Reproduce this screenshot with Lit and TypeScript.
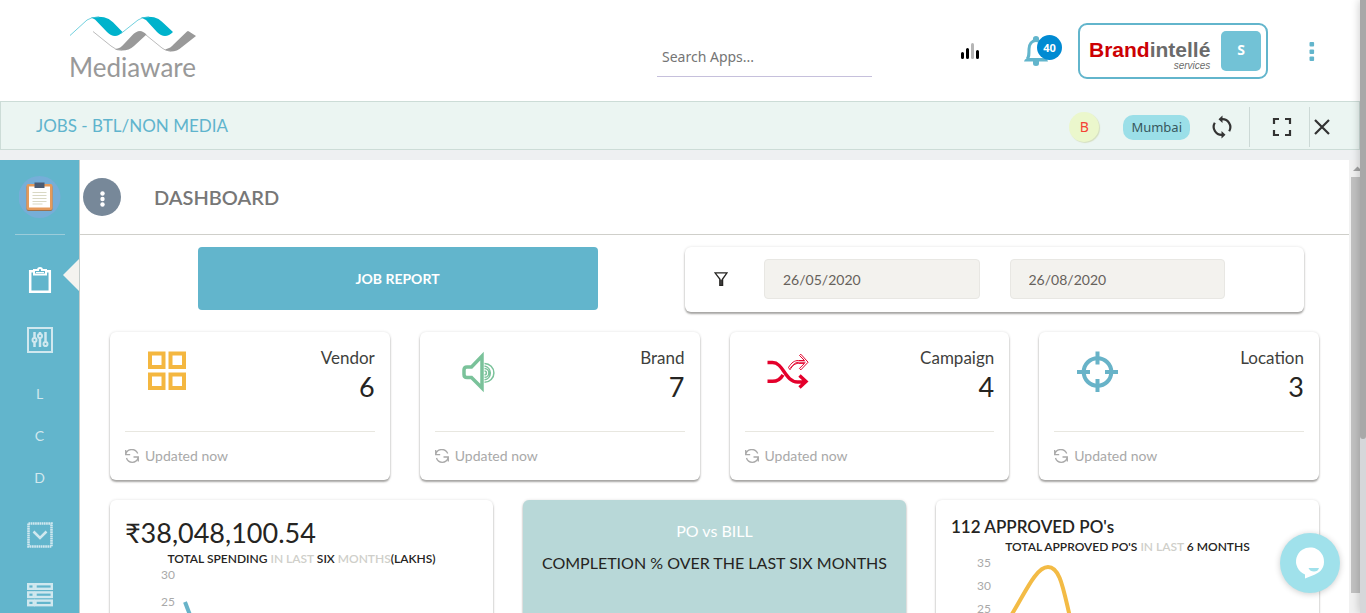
import { LitElement, html, css, svg } from "lit";
import { customElement, property } from "lit/decorators.js";

const statIcons: Record<string, unknown> = {
  Vendor: svg`<g fill="none" stroke="#f4b740" stroke-width="4"><rect x="4" y="3.500" width="13.500" height="13.500"/><rect x="24.500" y="3.500" width="13.500" height="13.500"/><rect x="4" y="24.500" width="13.500" height="13.500"/><rect x="24.500" y="24.500" width="13.500" height="13.500"/></g>`,
  Brand: svg`<g fill="none" stroke="#7ac29a" transform="translate(3.500 1)"><path stroke-width="3.500" d="M22.500 5v32L12 26.500H7.500q-3 0-3-3v-4.500q0-3 3-3H12z"/><path stroke-width="1.500" d="M25 12.500a9 9 0 0 1 0 18.800M25 15a7 7 0 0 1 0 13.800M25 17.500a4.400 4.400 0 0 1 0 8.800M25 20a1.800 1.800 0 0 1 0 3.800"/></g>`,
  Campaign: svg`<g fill="none" stroke="#e4002b" transform="translate(.5 1)"><path stroke-width="3.400" d="M1 11.500h5c11 0 12.500 19.500 25 19.500h8M1 30.300h5c5 0 8-2 10.500-6.500M33 24.500l6.500 6-6.500 6"/><path stroke-width="1" d="M22 16.500c3-5 6-7 10-7h6l-5-5 1.300-1.300 7.300 8-7.300 7.700-1.300-1.500 5-5h-6c-3.500 0-6 2-8.500 6.300zM24 17c3-4 5-5.800 9-5.800h6"/></g>`,
  Location: svg`<g fill="none" stroke="#68b3c8" stroke-width="4" transform="translate(2 .5)"><circle cx="20.500" cy="21.500" r="13.800"/><path d="M20.500 1v13M20.500 28.500v13M0 21.500h13M28 21.500h13"/></g>`,
};

@customElement("stat-card")
class StatCard extends LitElement {
  @property() label = "";
  @property() value = "";

  static styles = css`
    :host {
      display: block;
      padding: 15px;
      border-radius: 6px;
      background: #fff;
      box-shadow: 0 2px 2px rgba(100, 98, 95, 0.55), 0 0 3px rgba(0, 0, 0, 0.12);
    }
    .body {
      display: flex;
      justify-content: space-between;
      min-height: 84px;
      padding-left: 21px;
    }
    .icon { width: 42px; height: 42px; margin-top: 3px; overflow: visible; }
    .figures { text-align: right; color: #252422; }
    .label { margin: 0; font-size: 17px; line-height: 22px; color: #403f3d; }
    .value { margin: 0; font-size: 27px; line-height: 36px; }
    .foot {
      display: flex;
      align-items: center;
      gap: 6px;
      border-top: 1px solid #e8e7e0;
      padding-top: 15px;
      font-size: 14px;
      line-height: 18px;
      color: #a9a9a9;
    }
    .reload { width: 14px; height: 14px; }
  `;

  render() {
    return html`
      <div class="body">
        <svg class="icon" viewBox="0 0 42 42">${statIcons[this.label]}</svg>
        <div class="figures">
          <p class="label">${this.label}</p>
          <p class="value">${this.value}</p>
        </div>
      </div>
      <div class="foot">
        <svg class="reload" viewBox="0 0 14 14" fill="none" stroke="#a9a9a9" stroke-width="1.300">
          <path d="M.7 1v4.600h4.500M.8 5A6.300 6.300 0 0 1 12.700 4.500M13.300 12.500V8H8.500M13 9A6 6 0 0 1 1.500 9" />
        </svg>
        <span>Updated now</span>
      </div>
    `;
  }
}

@customElement("app-root")
class AppRoot extends LitElement {
  static styles = css`
    * { box-sizing: border-box; }
    :host {
      display: flex;
      flex-direction: column;
      position: relative;
      height: 100vh;
      overflow: hidden;
      background: #eef0f2;
      font-family: Lato, "Liberation Sans", sans-serif;
      color: #252422;
    }
    button { border: 0; padding: 0; background: none; font: inherit; color: inherit; cursor: pointer; }
    svg { display: block; flex: none; }

    .top {
      flex: none;
      display: flex;
      align-items: center;
      height: 101px;
      padding: 0 46px 0 69px;
      background: #fff;
    }
    .logo { margin-right: auto; padding-bottom: 4px; color: #999; text-decoration: none; }
    .logo-mark { width: 127px; height: 37px; }
    .logo-name { display: block; font-size: 26px; line-height: 28px; }
    .search {
      width: 215px;
      height: 40px;
      margin: 12px 88px 0 0;
      padding: 0 5px;
      border: 0;
      border-bottom: 1px solid #c6c0dc;
      outline: 0;
      background: none;
      font-family: "Noto Sans", sans-serif;
      font-size: 14px;
    }
    .search::placeholder { color: #757575; }
    .bell { position: relative; width: 38px; height: 30px; margin: 0 16px 0 44px; }
    .badge {
      position: absolute;
      top: -1px;
      right: 0;
      width: 25px;
      height: 25px;
      border-radius: 50%;
      background: #008ad2;
      color: #fff;
      font: bold 11px/25px "Noto Sans", sans-serif;
      text-align: center;
    }
    .account {
      display: flex;
      align-items: center;
      justify-content: space-between;
      width: 190px;
      height: 56px;
      padding: 0 5px 0 9px;
      border: 2px solid #62b5cc;
      border-radius: 9px;
    }
    .brand { display: flex; flex-direction: column; padding-top: 6px; text-align: right; font-family: "Liberation Sans", sans-serif; color: #6b6b6b; }
    .brand-name { font-size: 21px; font-weight: bold; line-height: 24px; }
    .brand-red { color: #cc0003; }
    .brand-sub { font-size: 10px; font-style: italic; line-height: 8px; }
    .initial {
      width: 40px;
      height: 40px;
      border-radius: 5px;
      background: #72c2d6;
      color: #fff;
      font: bold 14px/38px "Noto Sans", sans-serif;
      text-align: center;
    }
    .menu { width: 16px; margin-left: 36px; }

    .bar {
      flex: none;
      display: flex;
      align-items: center;
      justify-content: space-between;
      height: 49px;
      margin: 0 6px 10px 0;
      padding: 0 25px 0 35px;
      border: 1px solid #ccdcd7;
      background: #ebf5f2;
    }
    .bar-title { margin: 0; font-size: 17px; font-weight: 400; color: #5fb4cd; }
    .tools { display: flex; align-items: center; padding-top: 3px; }
    .tag-b {
      width: 30px;
      height: 30px;
      margin-right: 24px;
      border-radius: 50%;
      background: #ebf7cc;
      box-shadow: 1px 1px 1px #d5dfc0;
      color: #f44336;
      font: 14px/30px "Noto Sans", sans-serif;
      text-align: center;
    }
    .pill {
      padding: 0 8px;
      border-radius: 10px;
      background: #9bdfe8;
      color: #37575d;
      font: 13px/25px "Noto Sans", sans-serif;
    }
    .tool { display: flex; align-items: center; height: 40px; }
    .tool-sync { margin: 0 15px 0 20px; }
    .tool-full { border-left: 1px solid #ccd9d6; padding: 0 15px 0 20px; }
    .tool-close { border-left: 1px solid #ccd9d6; }

    .work { flex: 1; min-height: 0; display: flex; }
    .side { flex: none; width: 80px; background: #62b5cc; border-right: 1px solid #c5cdcb; color: #d2e8ee; }
    .side-top { display: flex; justify-content: center; height: 75px; margin: 0 14px 15px 15px; padding-top: 16px; border-bottom: 1px solid #9bccda; }
    .side-item { position: relative; display: flex; align-items: center; justify-content: center; height: 60px; }
    .notch {
      position: absolute;
      top: 9px;
      right: 0;
      border: 16px solid transparent;
      border-left-width: 0;
      border-right-color: #f4f3ef;
    }
    .letters { padding: 2px 0 7px; }
    .letter { display: block; width: 100%; height: 42px; font-size: 14px; }

    .page { flex: 1; min-width: 0; overflow: hidden; background: #fff; }
    .head { display: flex; align-items: center; gap: 33px; height: 75px; padding-left: 3px; border-bottom: 1px solid #cfcfca; }
    .dots { width: 38px; height: 38px; border-radius: 50%; background: #778899; }
    .head-title { margin: 0; font-size: 20px; font-weight: 600; color: #777; }
    .content { display: grid; gap: 20px; padding: 12px 30px; }
    .first { display: grid; grid-template-columns: 575fr 619fr; align-items: start; margin-right: 15px; }
    .report {
      justify-self: center;
      width: 100%;
      max-width: 400px;
      height: 63px;
      border-radius: 4px;
      background: #62b5cc;
      color: #fff;
      font-size: 14px;
      font-weight: bold;
    }
    .card { border-radius: 6px; background: #fff; box-shadow: 0 2px 2px rgba(100, 98, 95, 0.55), 0 0 3px rgba(0, 0, 0, 0.12); }
    .filter { display: flex; align-items: center; gap: 36px; padding: 12px 79px 13px 29px; }
    .date {
      width: 100%;
      min-width: 0;
      height: 40px;
      padding: 0 18px;
      border: 1px solid #e8e7e3;
      border-radius: 4px;
      background: #f3f2ee;
      color: #66615b;
      font: 14px Lato, sans-serif;
    }
    .dates { flex: 1; display: grid; grid-template-columns: 1fr 1fr; gap: 30px; }
    .stats { display: grid; grid-template-columns: repeat(4, 1fr); gap: 30px; }
    .charts { display: grid; grid-template-columns: repeat(3, 1fr); gap: 30px; }
    .panel { padding: 15px; min-height: 300px; }
    .total { margin: 0; font-size: 27px; font-weight: 400; line-height: 36px; }
    .approved { margin: 0; font-size: 17px; font-weight: 600; line-height: 24px; }
    .sub { margin: 0; font-size: 12px; font-weight: 600; line-height: 16px; text-align: center; }
    .mute { color: #cfcfca; }
    .plot { display: flex; color: #a9a9a9; font-size: 12px; line-height: 16px; text-align: right; }
    .axis { display: grid; align-content: start; gap: 11px; width: 50px; }
    .axis-tight { gap: 7px; width: 40px; }
    .compare { background: #b8d8d8; text-align: center; font-size: 16px; line-height: 32px; }
    .compare-title { margin: 0; color: #fff; font-size: 16px; font-weight: 400; }
    .compare-text { margin: 0; }

    .track { flex: none; width: 17px; display: flex; flex-direction: column; padding: 0 0 20px 2px; background: #f1f1f1; }
    .arrow { height: 17px; }
    .thumb { flex: 1; background: #c1c1c1; }
    .outer {
      position: absolute;
      top: 0;
      right: 0;
      bottom: 0;
      width: 6px;
      background: #d5d7da;
      box-shadow: 0 0 8px rgba(0, 0, 0, 0.25);
    }
    .outer-thumb { height: 439px; border-radius: 0 0 3px 3px; background: #a8a8a8; }
    .chat {
      position: absolute;
      right: 26px;
      bottom: 20px;
      width: 60px;
      height: 60px;
      border-radius: 50%;
      background: #a0e1eb;
      box-shadow: 0 1px 6px rgba(0, 0, 0, 0.2);
    }
  `;

  render() {
    return html`
      <header class="top">
        <a class="logo" href="#" aria-label="Mediaware">
          <svg class="logo-mark" viewBox="0 0 127 37">
            <path fill="#00b3cc" d="M22 1.500Q29 0 35 1.300q5 1 9 5L53.500 16Q50 20 46 20q-4 0-8-4L26 3.500zM72 1.500Q79 0 85 1.300q5 1 8 4.500L104 16q-4 4-8 4-4 0-8-4L77 4z" />
            <path fill="none" stroke="#4cc4d6" stroke-width=".8" d="M1 19.500L18 4Q22 1 30 1M52 17.500L69 4Q73 1 80 1" />
            <path fill="#999" d="M46 33.500q6-1.500 9-5.500l8-8.500q4-4.500 8-4.500 3 0 6.500 3.500L65 30q-5 4.500-12 4.500-5 0-7-1zM96 33.500q6-1.500 9-5.500l13-12.500q1-1 2 0l7 4.500L113 31q-5 4.500-11 4.500-4 0-6-2z" />
            <path fill="none" stroke="#aaa" stroke-width=".8" d="M24 15.500l18 14.500q4 4 11 4M77 19l16 13q3 3 9 3" />
          </svg>
          <span class="logo-name">Mediaware</span>
        </a>
        <input class="search" type="text" placeholder="Search Apps..." aria-label="Search Apps" />
        <button aria-label="Statistics">
          <svg width="20" height="18" viewBox="0 0 20 18" stroke-width="3" stroke-linecap="round">
            <path stroke="#000" d="M2.500 11.500v4M7.500 7.500v8M17.500 9.500v6" />
            <path stroke="#b5b5b5" d="M12.500 2.500v13" />
          </svg>
        </button>
        <button class="bell" aria-label="Notifications">
          <svg width="26" height="30" viewBox="0 0 26 30">
            <path fill="none" stroke="#62b5cc" stroke-width="3" d="M3 23c2-1.500 2-4 2-10 0-5 3-8.500 7-8.500s8 3.500 8 8.500c0 6 0 8.500 2 10" />
            <path fill="#62b5cc" d="M0 25.500q0-2 3-3.500h18q3 1.500 3 3.500zM9 2.500a3 2.500 0 0 1 6 0V5H9zM9 25h6v2.500a3 2.500 0 0 1-6 0z" />
          </svg>
          <span class="badge">40</span>
        </button>
        <button class="account">
          <span class="brand">
            <span class="brand-name"><span class="brand-red">Brand</span>intellé</span>
            <span class="brand-sub">services</span>
          </span>
          <span class="initial">S</span>
        </button>
        <button class="menu" aria-label="More">
          <svg width="16" height="20" viewBox="0 0 16 20" fill="#62b5cc"><rect x="5.500" y="1" width="4.600" height="4.600" rx="1" /><rect x="5.500" y="8.500" width="4.600" height="4.600" rx="1" /><rect x="5.500" y="15.400" width="4.600" height="4.600" rx="1" /></svg>
        </button>
      </header>

      <section class="bar">
        <h1 class="bar-title">JOBS - BTL/NON MEDIA</h1>
        <div class="tools">
          <span class="tag-b">B</span>
          <span class="pill">Mumbai</span>
          <button class="tool tool-sync" aria-label="Refresh">
            <svg width="24" height="24" viewBox="0 0 24 24" fill="none" stroke="#333" stroke-width="2.200">
              <path d="M11.500 4.200a8 8 0 0 1 7.700 12M12.500 19.800a8 8 0 0 1-7.700-12" />
              <path fill="#333" stroke="none" d="M12.500.5v7.500l-4-3.800zM11.500 16v7.500l4-3.800z" />
            </svg>
          </button>
          <button class="tool tool-full" aria-label="Full screen">
            <svg width="24" height="24" viewBox="0 0 24 24" fill="none" stroke="#333" stroke-width="2.200"><path d="M4 9V4h5M15 4h5v5M20 15v5h-5M9 20H4v-5" /></svg>
          </button>
          <button class="tool tool-close" aria-label="Close">
            <svg width="24" height="24" viewBox="0 0 24 24" fill="none" stroke="#333" stroke-width="2.200"><path d="M5 5l14 14M19 5L5 19" /></svg>
          </button>
        </div>
      </section>

      <div class="work">
        <nav class="side">
          <div class="side-top">
            <svg width="42" height="42" viewBox="0 0 42 42">
              <circle cx="20.500" cy="21" r="21" fill="#76aed8" />
              <rect x="7.500" y="9" width="26" height="26" rx="2" fill="#9b7350" />
              <rect x="7.500" y="8" width="26" height="26" rx="2" fill="#e59a5b" />
              <path fill="#fff" d="M10 10.500h21v21h-21z" />
              <path fill="#4c5b73" d="M15.500 6.500h10v5.500h-10z" />
              <path stroke="#d9d8c4" stroke-width="1" d="M13.500 16.500h14M13.500 19.500h14M13.500 22.500h14M13.500 25.500h14M13.500 28h10" />
            </svg>
          </div>
          <a class="side-item" href="#" aria-label="Dashboard">
            <svg width="26" height="28" viewBox="0 0 26 28" fill="none" stroke="#fff"><path stroke-width="2.500" d="M7 5.200H3.200v20.600h19.600V5.200H19" /><path stroke-width="2" d="M7 4h4q0-2 2-2t2 2h4v4.500H7z" /><path d="M9 6.500h8" /></svg>
            <span class="notch"></span>
          </a>
          <a class="side-item" href="#" aria-label="Settings">
            <svg width="26" height="26" viewBox="0 0 26 26" fill="none" stroke="#d0e8ef" stroke-width="2"><rect x="1" y="1" width="24" height="24" /><path stroke-width="2.500" d="M7.500 5v15M13 5v15M18.500 5v15" /><g fill="#62b5cc" stroke-width="2"><circle cx="7.500" cy="13" r="2" /><circle cx="13" cy="9" r="2" /><circle cx="18.500" cy="17" r="2" /></g></svg>
          </a>
          <div class="letters">
            ${["L", "C", "D"].map((l) => html`<button class="letter">${l}</button>`)}
          </div>
          <a class="side-item" href="#" aria-label="Approvals">
            <svg width="26" height="26" viewBox="0 0 26 26" fill="none" stroke="#d0e8ef"><rect x="1.500" y="1.500" width="23" height="23" stroke-width="2.600" stroke-dasharray="1.700 .5" /><path stroke-width="2.500" d="M6.500 9.500l6.500 6.500 6.500-6.500" /></svg>
          </a>
          <a class="side-item" href="#" aria-label="Records">
            <svg width="26" height="24" viewBox="0 0 26 24" fill="none" stroke="#d0e8ef" stroke-width="2.400">${[1.2, 9.4, 17.6].map((y) => svg`<rect x="1.200" y=${y} width="5.500" height="4.600"/><rect x="8.500" y=${y} width="16.300" height="4.600"/>`)}</svg>
          </a>
        </nav>

        <main class="page">
          <div class="head">
            <button class="dots" aria-label="Options">
              <svg width="38" height="38" viewBox="0 0 38 38" fill="#fff"><circle cx="19.500" cy="15.500" r="2.200" /><circle cx="19.500" cy="21" r="2.200" /><circle cx="19.500" cy="26.500" r="2.200" /></svg>
            </button>
            <h2 class="head-title">DASHBOARD</h2>
          </div>
          <div class="content">
            <div class="first">
              <button class="report">JOB REPORT</button>
              <div class="card filter">
                <svg class="funnel" width="14" height="14" viewBox="0 0 14 14" fill="none" stroke="#252422" stroke-width="1.300"><path d="M1 .8h12L8.600 7v6.500H5.800V7zM7.200 7.500v6" /></svg>
                <div class="dates">
                  <input class="date" type="text" aria-label="From date" .value=${"26/05/2020"} />
                  <input class="date" type="text" aria-label="To date" .value=${"26/08/2020"} />
                </div>
              </div>
            </div>
            <div class="stats">
              <stat-card label="Vendor" value="6"></stat-card>
              <stat-card label="Brand" value="7"></stat-card>
              <stat-card label="Campaign" value="4"></stat-card>
              <stat-card label="Location" value="3"></stat-card>
            </div>
            <div class="charts">
              <section class="card panel">
                <h3 class="total">₹38,048,100.54</h3>
                <p class="sub">TOTAL SPENDING <span class="mute">IN LAST</span> SIX <span class="mute">MONTHS</span>(LAKHS)</p>
                <div class="plot">
                  <div class="axis"><span>30</span><span>25</span></div>
                  <svg width="120" height="90" viewBox="0 0 120 90" fill="none" stroke="#68b3c8" stroke-width="4"><path d="M10 35L28 82" /></svg>
                </div>
              </section>
              <section class="card panel compare">
                <h3 class="compare-title">PO vs BILL</h3>
                <p class="compare-text">COMPLETION % OVER THE LAST SIX MONTHS</p>
              </section>
              <section class="card panel">
                <h3 class="approved">112 APPROVED PO's</h3>
                <p class="sub">TOTAL APPROVED PO'S <span class="mute">IN LAST</span> 6 MONTHS</p>
                <div class="plot">
                  <div class="axis axis-tight"><span>35</span><span>30</span><span>25</span></div>
                  <svg width="120" height="90" viewBox="0 0 120 90" fill="none" stroke="#f3bb45" stroke-width="4"><path d="M16 68L21 59C34 38 45 12 57 12S72 33 79 62L82 76" /></svg>
                </div>
              </section>
            </div>
          </div>
        </main>
        <div class="track">
          <svg class="arrow" width="15" height="17" viewBox="0 0 15 17"><path fill="#a3a3a3" d="M2 11l4.500-4.500L11 11z" /></svg>
          <div class="thumb"></div>
        </div>
      </div>

      <div class="outer"><div class="outer-thumb"></div></div>
      <button class="chat" aria-label="Chat">
        <svg width="60" height="60" viewBox="0 0 60 60"><path fill="#fff" d="M25 45.500v-4A14 14 0 1 1 44 29c0 8-6 11-9 12.500z" /><path fill="#a0e1eb" d="M28.500 35h10.500q-1 3.500-5 3.500T28.500 35z" /></svg>
      </button>
    `;
  }
}
